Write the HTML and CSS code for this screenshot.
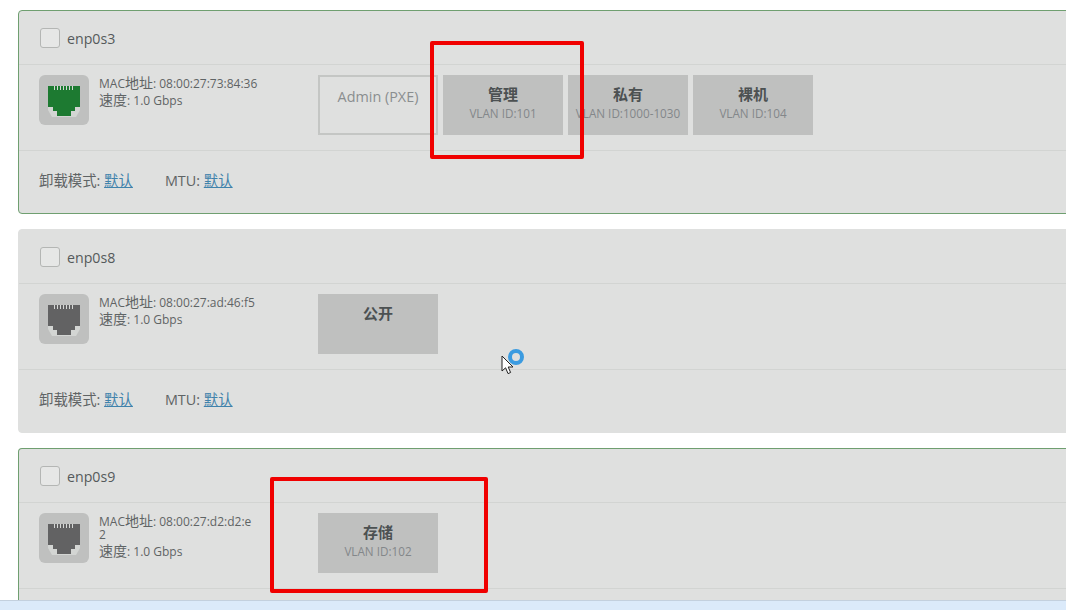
FILE: index.html
```html
<!DOCTYPE html>
<html lang="zh-CN">
<head>
    <meta charset="UTF-8">
    <meta name="viewport" content="width=device-width, initial-scale=1.0">
    <title>Interfaces</title>
    <link rel="stylesheet" href="styles.css">
</head>

<body>
    <div class="interfaces">
        <!-- enp0s3 -->
        <div class="iface iface-up">
            <div class="iface-header">
                <span class="check"></span>
                <span class="iface-name">enp0s3</span>
            </div>
            <div class="iface-body">
                <div class="port port-green">
                    <svg width="32" height="32" viewBox="0 0 32 32"><path d="M0 21H32V24L28 31H4L0 24Z" fill="#d3d5d3"/><path d="M0 0H32V21H27V25H23V30H9V25H5V21H0Z" fill="currentColor"/><path d="M6.5 0V4M9.5 0V4M12.5 0V4M15.5 0V4M18.5 0V4M21.5 0V4M24.5 0V4" stroke="#d6d8d6"/></svg>
                </div>
                <div class="iface-info">
                    <div>MAC<span class="cjk">地址</span>: 08:00:27:73:84:36</div>
                    <div class="speed"><span class="cjk">速度</span>: 1.0 Gbps</div>
                </div>
                <div class="networks">
                    <div class="network network-empty"><b>Admin (PXE)</b></div>
                    <div class="network"><b>管理</b><span>VLAN ID:101</span></div>
                    <div class="network"><b>私有</b><span>VLAN ID:1000-1030</span></div>
                    <div class="network"><b>裸机</b><span>VLAN ID:104</span></div>
                </div>
            </div>
            <div class="iface-footer">
                <span>卸载模式: <a href="#">默认</a></span>
                <span>MTU: <a href="#">默认</a></span>
            </div>
        </div>

        <!-- enp0s8 -->
        <div class="iface">
            <div class="iface-header">
                <span class="check"></span>
                <span class="iface-name">enp0s8</span>
            </div>
            <div class="iface-body">
                <div class="port">
                    <svg width="32" height="32" viewBox="0 0 32 32"><path d="M0 21H32V24L28 31H4L0 24Z" fill="#d3d5d3"/><path d="M0 0H32V21H27V25H23V30H9V25H5V21H0Z" fill="currentColor"/><path d="M6.5 0V4M9.5 0V4M12.5 0V4M15.5 0V4M18.5 0V4M21.5 0V4M24.5 0V4" stroke="#d6d8d6"/></svg>
                </div>
                <div class="iface-info">
                    <div>MAC<span class="cjk">地址</span>: 08:00:27:ad:46:f5</div>
                    <div class="speed"><span class="cjk">速度</span>: 1.0 Gbps</div>
                </div>
                <div class="networks">
                    <div class="network"><b>公开</b></div>
                </div>
            </div>
            <div class="iface-footer">
                <span>卸载模式: <a href="#">默认</a></span>
                <span>MTU: <a href="#">默认</a></span>
            </div>
        </div>

        <div class="iface iface-up iface-cut">
            <div class="iface-header">
                <span class="check"></span>
                <span class="iface-name">enp0s9</span>
            </div>
            <div class="iface-body">
                <div class="port">
                    <svg width="32" height="32" viewBox="0 0 32 32"><path d="M0 21H32V24L28 31H4L0 24Z" fill="#d3d5d3"/><path d="M0 0H32V21H27V25H23V30H9V25H5V21H0Z" fill="currentColor"/><path d="M6.5 0V4M9.5 0V4M12.5 0V4M15.5 0V4M18.5 0V4M21.5 0V4M24.5 0V4" stroke="#d6d8d6"/></svg>
                </div>
                <div class="iface-info">
                    <div>MAC<span class="cjk">地址</span>: 08:00:27:d2:d2:e2</div>
                    <div class="speed"><span class="cjk">速度</span>: 1.0 Gbps</div>
                </div>
                <div class="networks">
                    <div class="network"><b>存储</b><span>VLAN ID:102</span></div>
                </div>
            </div>
        </div>
    </div>

    <!-- Annotations drawn over the screenshot -->
    <div class="mark mark-one"></div>
    <div class="mark mark-two"></div>

    <div class="pointer">
        <span class="spinner"></span>
        <svg width="14" height="20" viewBox="0 0 14 20"><path d="M1 1V16L4.6 12.8L7 18.6L9.6 17.5L7.2 12H12Z" fill="#fff" stroke="#222" stroke-width="1"/></svg>
    </div>

    <div class="bottom-bar"></div>
</body>
</html>
```

FILE: styles.css
```css
html, body {
    height: 100%;
}

body {
    font-family: 'Open Sans', 'Noto Sans CJK SC', sans-serif;
    margin: 0;
    padding: 0;
    background-color: #fff;
    color: #5f6465;
    font-size: 12px;
    overflow: hidden;
    position: relative;
}

.interfaces {
    display: flex;
    flex-direction: column;
    gap: 15px;
    padding: 10px 0 0 18px;
    width: 1100px;
}

.iface {
    background: #dfe0df;
    border: 1px solid #dfe0df;
    border-radius: 4px;
    height: 204px;
    box-sizing: border-box;
    flex-shrink: 0;
}

.iface-up {
    border-color: #6f9f70;
}

.iface-cut {
    height: 152px;
    border-bottom: none;
    border-radius: 4px 4px 0 0;
}

.iface-header {
    display: flex;
    align-items: center;
    gap: 7px;
    height: 54px;
    padding-left: 21px;
    box-sizing: border-box;
    border-bottom: 1px solid #d2d4d2;
}

.check {
    width: 18px;
    height: 18px;
    background: #e6e7e6;
    border: 1px solid #b4b6b4;
    border-radius: 3px;
}

.iface-name {
    padding-top: 2px;
    font-size: 14.2px;
    color: #555a5b;
}

.iface-body {
    display: flex;
    height: 86px;
    box-sizing: border-box;
    padding: 10px 0 0 20px;
    border-bottom: 1px solid #d2d4d2;
}

.port {
    display: flex;
    justify-content: center;
    align-items: flex-start;
    width: 50px;
    height: 50px;
    padding-top: 11px;
    box-sizing: border-box;
    border-radius: 6px;
    background: #bfc0bf;
    color: #626263;
    flex-shrink: 0;
}

.port-green {
    color: #1d7a31;
}

.iface-info {
    width: 158.5px;
    margin: 1px 60.5px 0 10px;
    line-height: 13px;
    word-break: break-all;
    flex-shrink: 0;
}

.cjk {
    font-size: 14px;
}

.speed {
    margin-top: 3px;
}

.networks {
    display: flex;
    gap: 5px;
}

.network {
    display: flex;
    flex-direction: column;
    align-items: center;
    box-sizing: border-box;
    width: 120px;
    height: 60px;
    padding-top: 10px;
    background: #bfc0bf;
    font-size: 11.7px;
    color: #83878a;
    white-space: nowrap;
}

.network b {
    font-size: 15px;
    line-height: 18px;
    color: #4c5152;
}

.network span {
    margin-top: 2px;
    line-height: 16px;
}

.network-empty {
    background: transparent;
    border: 2px solid #c4c6c4;
    padding-top: 10px;
}

.network-empty b {
    font-weight: normal;
    font-size: 14.4px;
    line-height: 20px;
    color: #8a8e8f;
}

.iface-footer {
    display: flex;
    align-items: center;
    gap: 32px;
    height: 56px;
    padding-left: 20px;
    font-size: 14.4px;
}

.iface-footer a {
    color: #3f82ab;
    text-decoration: underline;
}

.mark {
    position: absolute;
    box-sizing: border-box;
    border: 4px solid #f00000;
    border-radius: 2px;
}

.mark-one {
    left: 430px;
    top: 41px;
    width: 154px;
    height: 118px;
}

.mark-two {
    left: 270px;
    top: 477px;
    width: 218px;
    height: 116px;
}

.pointer {
    position: absolute;
    left: 501px;
    top: 349px;
    width: 24px;
    height: 28px;
}

.pointer svg {
    position: absolute;
    left: 0;
    top: 6px;
}

.spinner {
    position: absolute;
    left: 7px;
    top: 0;
    width: 8px;
    height: 8px;
    border: 4px solid #3b9be0;
    border-radius: 50%;
    background: #dfe0df;
}

.bottom-bar {
    position: absolute;
    left: 0;
    right: 0;
    bottom: 0;
    height: 9px;
    background: #dbeafa;
    border-top: 1px solid #c3d0de;
}
```
